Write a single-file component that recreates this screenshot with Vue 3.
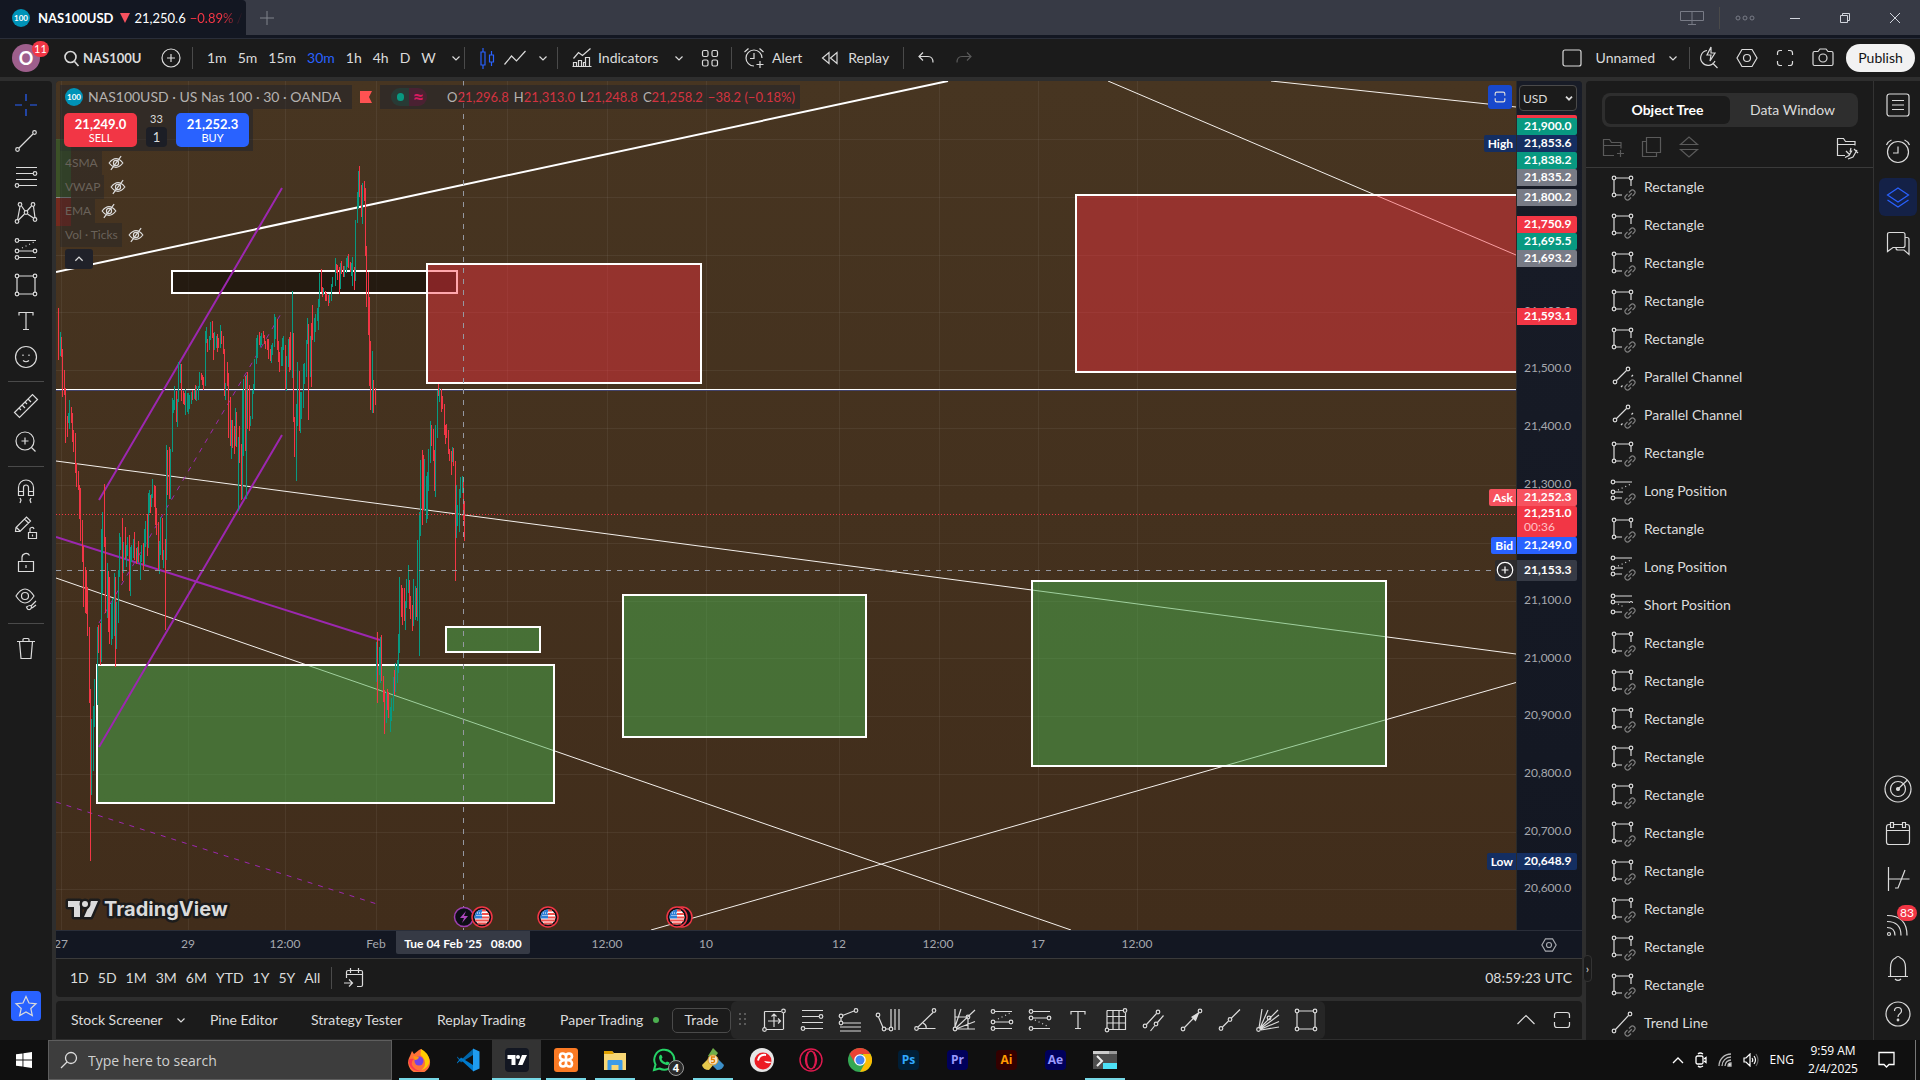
<script setup>
import { h } from 'vue'

const link = '<g transform="rotate(-45 21 22)" stroke="#7d7d7d" fill="none"><path d="M20 19.500h-2.500a2.500 2.500 0 0 0 0 5h2.500M22 19.500h2.500a2.500 2.500 0 0 1 0 5h-2.500M18.500 22h5"/></g>'
const dot = (x, y) => `<circle cx="${x}" cy="${y}" r="1.800"/>`

const icons = {
  cross: '<path d="M14 3v7M14 18v7M3 14h7M18 14h7"/>',
  trend: dot(5.5, 22.5) + dot(22.5, 5.5) + '<path d="M7 21L21 7"/>',
  fib: '<path d="M4 4.500h21M4 10.500h17M4 16.500h21M7 22.500h18"/>' + dot(23, 10.5) + dot(5, 22.5),
  pattern: dot(5, 22.5) + dot(8, 5.5) + dot(21, 5.5) + dot(23, 20.5) + dot(14, 13.5) + '<path d="M5.500 21L8 7.500M9.500 7l3.500 5M19.500 7l-4.500 5M21.500 7.500L23 19M15.500 15l6 4M12.500 15l-6 6"/>',
  long: dot(5, 5.5) + dot(5, 16) + dot(5, 22.5) + dot(23, 16) + '<path d="M7 5.500h17M7 16h14M7 22.500h17"/><path stroke-dasharray="1 3" d="M10 13l12-6"/>',
  short: dot(5, 5.5) + dot(5, 12) + dot(5, 22.5) + dot(23, 12) + '<path d="M7 5.500h17M7 12h14M7 22.500h17"/><path stroke-dasharray="1 3" d="M9 14l12 6"/>',
  rect: dot(5, 5) + dot(23, 5) + dot(5, 23) + dot(23, 23) + '<path d="M7 5h14M7 23h14M5 7v14M23 7v14"/>',
  text: '<path d="M7 8.500V5.500h14v3M14 5.500v17M11 22.500h6"/>',
  smile: '<circle cx="14" cy="14" r="10.500"/><path d="M11 17.500q3 2.500 6 0M11 11.500v1.500M17 11.500v1.500"/>',
  ruler: '<path d="M2.500 20.500L20.500 2.500l5 5-18 18zM7 16l2 2M10 13l3 3M13 10l2 2M16 7l3 3"/>',
  zoom: '<circle cx="13" cy="13" r="9"/><path d="M19.500 19.500l4 4M13 9.500v7M9.500 13h7"/>',
  magnet: '<path d="M6.500 18.500v-8a7.500 7.500 0 0 1 15 0v8h-5v-8a2.500 2.500 0 0 0-5 0v8zM6.500 14.500h5M16.500 14.500h5M8 21l1 2-1 3M19 21l-1 2 1 3"/>',
  pencilLock: '<path d="M3.500 18.500l.5-4L14.500 4l4 4L8 18.500zM12.500 6l4 4M4.500 14.500l3.500 3.500M16.500 19.500h8v6h-8zM18 19.500v-2.500a2 2 0 0 1 4-1M20.500 21.500v2"/>',
  lock: '<path d="M6.500 12.500h15v10h-15zM10 12.500v-4a4 4 0 0 1 7.500-2M14 16v3"/>',
  eye: '<path d="M4 11q9-14 18 0q-9 14-18 0z"/><circle cx="13" cy="11" r="3.500"/><path d="M14.500 22c3-2 5-2 5 0s-2 3.500-4 2zM19 21l5-5M20 23l4-3"/>',
  trash: '<path d="M5 7.500h18M7.500 7.500l1.500 17h10l1.500-17M11 7.500v-2q0-1 1-1h4q1 0 1 1v2"/>',
  star: '<path d="M14 4.500l3 6.500 7 .8-5.200 4.700 1.500 7-6.300-3.600-6.300 3.600 1.500-7L4 11.800l7-.8z"/>',
  search: '<circle cx="12.500" cy="13" r="5.500"/><path d="M16.500 17.500l4 4.500"/>',
  plusCircle: '<circle cx="14" cy="14" r="9"/><path d="M14 10v8M10 14h8"/>',
  caret: '<path d="M10.500 12.500L14 16l3.500-3.500"/>',
  candles: '<path d="M8 8h4v13H8zM10 4v4M10 21v4M16.500 11h4v7h-4zM18.500 7v4M18.500 18v4"/>',
  line: '<path d="M3.500 20.500l7-8.500 5 5 9-10"/>',
  indicators: '<path d="M5.500 14.500l5-6 4 3 8-7M5.500 22.500v-4h3v4zM10.500 22.500v-6h3v6zM15.500 22.500v-4h2v4M17.500 22.500v-9h4v9zM4.500 22.500h19"/>',
  grid: '<rect x="6.500" y="6.500" width="5.500" height="6" rx="1.500"/><rect x="16" y="6.500" width="5.500" height="6" rx="1.500"/><rect x="6.500" y="16" width="5.500" height="6" rx="1.500"/><rect x="16" y="16" width="5.500" height="6" rx="1.500"/>',
  alert: '<path d="M14 22a8 8 0 1 1 8-8M14 9v5.500h-4M4.500 8l4-3.500M23.500 8l-4-3.500M20 17v7M16.500 20.500h7"/>',
  replay: '<path d="M13 8.500v11L6.500 14zM21 8.500v11L14.500 14z"/>',
  undo: '<path d="M11 8.500l-4 4 4 4M7 12.500h9q5 0 5 6"/>',
  redo: '<path d="M17 8.500l4 4-4 4M21 12.500h-9q-5 0-5 6"/>',
  box: '<rect x="5" y="6" width="18" height="16" rx="2"/>',
  quick: '<path d="M12 6.500A7.500 7.500 0 1 0 20 17M17.500 19l5 5M16 3l-4 8h4l-1 6 5-8h-4z"/>',
  hex: '<path d="M9 5.500h10l5 8.500-5 8.500H9L4 14z"/><circle cx="14" cy="14" r="3.500"/>',
  full: '<path d="M6.500 11V9q0-2.500 2.500-2.500h2M17 6.500h2q2.500 0 2.500 2.500v2M21.500 17v2q0 2.500-2.500 2.500h-2M11 21.500H9q-2.500 0-2.500-2.500v-2"/>',
  camera: '<path d="M4 9q0-1.500 1.500-1.500H9l2-2.500h6l2 2.500h3.500q1.500 0 1.500 1.500v11q0 1.500-1.500 1.500h-17Q4 21.500 4 20z"/><circle cx="14" cy="14" r="4"/>',
  eyeOff: '<path d="M6 14q8-10 16 0q-8 10-16 0zM20 6L8 22"/><circle cx="14" cy="14" r="3"/>',
  list: '<rect x="3" y="3" width="22" height="22" rx="2.500"/><path d="M8 9.500h12M8 14h12M8 18.500h12"/>',
  alarm: '<circle cx="14" cy="15" r="10.500"/><path d="M14 9.500v6.500h-5M2.500 8Q4 4.500 7.500 3M25.500 8Q24 4.500 20.500 3"/>',
  layers: '<path d="M14 5l10.500 7L14 19 3.500 12zM3.500 17L14 24l10.500-7"/>',
  chat: '<path d="M5.500 3.500h13.500q2 0 2 2v11q0 2-2 2H9l-5.500 4v-17q0-2 2-2zM21 8.500h2q2 0 2 2v15l-5-4.500h-6q-2 0-2-2"/>',
  radar: '<circle cx="14" cy="14" r="13"/><circle cx="14" cy="14" r="7.500"/><circle cx="14" cy="14" r="1.500" fill="currentColor"/><path d="M14 14l9.500-9"/>',
  calendar: '<path d="M6 4.500H5q-2.500 0-2.500 2.500v15q0 2.500 2.500 2.500h18q2.500 0 2.500-2.500V7q0-2.500-2.500-2.500h-1M9.500 4.500h9M2.500 10.500h23M6.500 2.500h3v5h-3zM18.500 2.500h3v5h-3z"/>',
  dom: '<path d="M4.500 2v24M4.500 14h21M11 23h3l7-18"/>',
  feed: '<circle cx="5" cy="24" r="1.500"/><path d="M3 17.500q8 0 8 8M3 11.500q14 0 14 14M3 5.500q20 0 20 20"/>',
  bell: '<path d="M4 21.500h20M6.500 21.500v-9q0-7.500 5-9.500 2.500-3 5 0 5 2 5 9.500v9M11 24q3 3 6 0"/>',
  help: '<circle cx="14" cy="14" r="12"/><path d="M10.500 11q0-3.500 3.500-3.500t3.500 3.500q0 1.500-2 3-1.500 1-1.500 3"/><circle cx="14" cy="20" r=".8"/>',
  folderAdd: '<path d="M15 22.500H4.500v-16h6l2 3h9.500v6M4.500 12.500h17M21.500 17v7M18 20.500h7"/>',
  copy: '<path d="M9.500 4.500h14v15h-14zM9.500 8.500h-4v15h14v-4"/>',
  updown: '<path d="M5.500 11.500L14 4l8.500 7.500zM5.500 16.500L14 24l8.500-7.500z"/>',
  folderBrush: '<path d="M12 22.500H4.500v-17h6l2 3h9.500v4M4.500 11.500h17M12 24.500l4-2 3-5M15 26l5-2 4-7M13 18l4 4M18 15l-1 4M21 16l4 4"/>',
  lRect: dot(5, 5) + dot(22, 5) + dot(5, 22) + '<path d="M7 5h13M7 22h6M5 7v13M22 7v6"/>' + link,
  lChannel: dot(6, 19) + dot(19, 6) + '<path d="M7.500 17.500l10-10M22.500 13.500l1.500-1.500M12 24l1.500-1.500"/>' + link,
  lLong: dot(4, 5) + dot(4, 15) + dot(4, 21) + '<path d="M6 5h17M6 15h8M6 21h7"/><path stroke-dasharray="1 3" d="M9 13l13-6"/>' + link,
  lShort: dot(4, 5) + dot(4, 11) + dot(4, 21) + '<path d="M6 5h17M6 11h14M6 21h7M20.500 12a1.500 1.500 0 1 1 3 0"/><path stroke-dasharray="1 3" d="M9 13l6 3"/>' + link,
  lTrend: dot(5, 22) + dot(21, 5) + '<path d="M6.500 20.500L19.500 6.500"/>' + link,
  goto: '<path d="M6.500 14V8q0-1.500 1.500-1.500h13q1.500 0 1.500 1.500v13q0 1.500-1.500 1.500h-4M6.500 10.500h16M10.500 4v5M18.500 4v5M4 19h8M9 15.500l3.500 3.500-3.500 3.500"/>',
  priceDate: '<path d="M4.500 5.500H21M4.500 5.500V22M6 23.500h17M23.500 7v16.500M14 8v13M8 15h12M11.500 10.500L14 8l2.500 2.500M18 12.500l2.500 2.500-2.500 2.500"/>' + dot(23.5, 5) + dot(4.5, 23.5),
  extension: dot(5, 10) + dot(20, 4.5) + dot(5, 17) + '<path d="M6.500 9.500L18 5M5 12v3M7 17h18M4 21h21M4 25h21"/>',
  timeFib: dot(4, 9) + dot(10, 23) + dot(17, 23) + '<path d="M4.500 11l4.500 10.500M12 23h3M17 3v18M21 3v21M25 3v21"/>',
  angle: dot(4.5, 22.5) + dot(22, 4.5) + '<path d="M6 21L21 6.500M6.500 22.500h17M11 17q4 2 3 5.500"/>',
  fan: dot(5, 23) + dot(18, 11) + '<path d="M5 3v18M7 23h18M5 21L11 3M6 22L25 4M7 22.500l18-7M5 11h11M18 13v10"/>',
  gridBox: '<path d="M5 4.500h17M5 4.500V22M7 23.500h16.500V7M5 10.500h18M5 17h18M11 5v18M17 5v18"/>' + dot(23, 4.5) + dot(5, 24),
  channel: dot(5, 20) + dot(18, 6) + dot(16, 18) + '<path d="M6.500 18.500l10-11M10.500 25l4-5M17.500 16.500l6-7"/>',
  arrow: dot(5, 23) + dot(22, 5) + '<path d="M6.500 21.500L20.500 7"/><path fill="currentColor" d="M20.500 7l-6.500 4 3.500 3.500z"/>',
  ray: dot(5, 22.5) + dot(14, 13.5) + '<path d="M6.500 21l6-6M15.500 12L24 3.500"/>',
  gann: dot(4.500, 23.500) + dot(15, 12) + '<path d="M5 22L8 3M6 22l8-18M6 22L24 4M6 23l19-14M6 23.500l19-8M7 24l18-3"/>',
  up: '<path d="M5.500 18L14 9.500l8.500 8.500"/>',
  restore: '<path d="M6.500 12v-3q0-2.500 2.500-2.500h10q2.500 0 2.500 2.500v3M6.500 16v3q0 2.500 2.500 2.500h10q2.500 0 2.500-2.500v-3"/>'
}

const Icon = (p) =>
  h('svg', {
    width: p.s || 28, height: p.s || 28, viewBox: '0 0 28 28', fill: 'none',
    stroke: 'currentColor', 'stroke-width': p.w || 1.2, 'aria-hidden': 'true', innerHTML: icons[p.n]
  })
Icon.props = ['n', 's', 'w']

const leftTools = [
  ['cross', 'Crosshair'], ['trend', 'Trend line'], ['fib', 'Fib retracement'], ['pattern', 'XABCD pattern'],
  ['long', 'Forecast'], ['rect', 'Shapes'], ['text', 'Text'], ['smile', 'Icons'], null,
  ['ruler', 'Measure'], ['zoom', 'Zoom in'], null,
  ['magnet', 'Magnet mode'], ['pencilLock', 'Keep drawing'], ['lock', 'Lock drawings'], ['eye', 'Hide drawings'], null,
  ['trash', 'Remove drawings']
]
const frames = ['1m', '5m', '15m', '30m', '1h', '4h', 'D', 'W']
const ranges = ['1D', '5D', '1M', '3M', '6M', 'YTD', '1Y', '5Y', 'All']
const favorites = ['priceDate', 'fib', 'extension', 'timeFib', 'angle', 'fan', 'long', 'short', 'text', 'gridBox', 'channel', 'arrow', 'ray', 'gann', 'rect']
const studies = ['4SMA', 'VWAP', 'EMA', 'Vol · Ticks']
const ohlc = [['O', '21,296.8'], ['H', '21,313.0'], ['L', '21,248.8'], ['C', '21,258.2']]

const kinds = { R: ['lRect', 'Rectangle'], P: ['lChannel', 'Parallel Channel'], L: ['lLong', 'Long Position'], S: ['lShort', 'Short Position'], T: ['lTrend', 'Trend Line'] }
const objects = [...'RRRRRPPRLRLSRRRRRRRRRRT'].map((k) => kinds[k])

const rightTop = [['list', 'Watchlist'], ['alarm', 'Alerts'], ['layers', 'Object tree'], ['chat', 'Chats']]
const rightBottom = [['radar', 'Screeners'], ['calendar', 'Calendars'], ['dom', 'Order panel'], ['feed', 'Streams'], ['bell', 'Notifications'], ['help', 'Help']]

const scale = [
  ['21,600.0', 230], ['21,500.0', 287], ['21,400.0', 345], ['21,300.0', 403], ['21,100.0', 519], ['21,000.0', 577],
  ['20,900.0', 634], ['20,800.0', 692], ['20,700.0', 750], ['20,600.0', 807]
]
const tags = [
  ['', 34, 'red'], ['21,900.0', 37, 'green'], ['21,853.6', 54, 'navy', 'High'], ['21,838.2', 71, 'green'],
  ['21,835.2', 88, 'grey'], ['21,800.2', 108, 'grey'], ['21,750.9', 135, 'red'], ['21,695.5', 152, 'green'],
  ['21,693.2', 169, 'grey'], ['21,593.1', 227, 'red'], ['21,252.3', 408, 'rose', 'Ask'],
  ['21,249.0', 456, 'blue', 'Bid'], ['20,648.9', 772, 'navy', 'Low']
]
const times = [['27', 5], ['29', 132], ['12:00', 229], ['Feb', 320], ['12:00', 551], ['10', 650], ['12', 783], ['12:00', 882], ['17', 982], ['12:00', 1081]]
const gridX = [61, 188, 285, 376, 507, 607, 706, 839, 939, 1038, 1137]
const gridY = [139, 197, 255, 312, 370, 428, 485, 543, 601, 658, 716, 774, 832, 889]

// price bars: x, high, low in thirds of a chart unit, measured from unit row 260
const down = [
  [175,144,300],[184,232,290],[187,267,411],[193,330,404],[196,384,549],[202,468,530],[214,441,490],[217,460,546],[220,510,576],[226,519,640],[229,610,681],[235,633,690],[238,676,777],[241,684,842],[247,780,906],[250,857,1041],[256,921,1060],[259,930,1062],[262,980,1128],[268,1101,1330],[271,1287,1803],[295,1095,1180],[301,1088,1215],[313,672,860],[316,831,1058],[325,933,1115],[328,950,1152],[346,951,1220],[367,774,963],[376,801,897],[388,825,993],[403,816,900],[409,864,912],[415,842,906],[430,850,930],[442,763,887],[451,705,760],[463,675,740],[466,678,795],[469,744,825],[475,786,932],[487,773,900],[496,837,1110],[502,570,705],[508,561,717],[529,393,487],[544,311,422],[550,393,433],[553,400,435],[577,390,420],[586,375,421],[604,339,360],[607,345,375],[610,350,390],[622,238,275],[637,183,235],[640,219,300],[652,222,277],[655,234,265],[664,213,252],[670,228,282],[673,267,408],[682,306,378],[685,339,533],[691,411,557],[697,480,563],[703,498,582],[709,457,560],[718,498,609],[724,552,719],[736,348,573],[742,336,507],[748,375,512],[778,216,255],[790,213,234],[793,224,252],[796,243,267],[802,238,270],[805,237,297],[811,267,304],[832,177,270],[835,243,306],[838,275,335],[856,255,390],[868,231,336],[871,216,330],[880,219,486],[883,470,591],[898,333,513],[925,192,480],[934,189,381],[937,135,240],[964,27,96],[967,81,111],[976,93,123],[979,98,124],[985,106,138],
  [1009,12,40],[1012,15,60],[1018,21,102],[1024,3,42],[1030,18,51],[1045,-18,24],[1051,6,36],[1063,21,90],[1078,-282,-189],[1084,-225,-129],[1093,-237,-177],[1096,-216,-12],[1099,-42,141],[1105,36,225],[1108,111,378],[1111,243,450],[1120,360,459],[1126,384,435],[1132,1116,1328],[1144,1125,1262],[1150,1248,1325],[1153,1290,1422],[1162,1287,1350],[1165,1295,1375],[1183,1230,1305],[1204,975,1070],[1207,984,1095],[1213,984,1083],[1228,960,1046],[1231,1008,1078],[1237,1036,1113],[1249,983,1070],[1267,570,795],[1270,585,750],[1294,495,558],[1300,507,603],[1303,570,693],[1315,372,408],[1324,387,456],[1327,408,447],[1333,432,525],[1336,495,552],[1339,492,534],[1345,510,582],[1348,567,603],[1354,573,645],[1360,564,618],[1366,603,963],[1390,650,780],[1393,723,843]
]
const up = [
  [181,216,288],[205,459,490],[208,420,507],[274,1377,1605],[280,1337,1533],[283,1257,1400],[292,1101,1335],[304,808,1205],[307,756,1000],[322,909,1074],[334,1030,1155],[337,1015,1137],[343,939,1127],[349,1027,1167],[355,930,1088],[358,819,950],[361,830,870],[370,845,940],[379,855,920],[382,831,888],[391,860,1007],[394,855,905],[400,837,893],[412,862,908],[421,885,960],[424,855,905],[433,808,915],[436,782,860],[445,699,863],[448,690,760],[454,703,740],[457,657,715],[478,843,941],[481,771,884],[490,870,925],[499,555,900],[511,567,717],[517,414,576],[520,420,460],[523,378,450],[532,417,500],[535,306,426],[541,312,370],[556,387,465],[562,400,455],[565,399,461],[568,404,447],[574,396,431],[583,389,418],[589,378,423],[595,378,419],[598,336,385],[616,213,378],[619,201,250],[628,229,270],[631,186,240],[643,216,270],[649,228,265],[661,195,265],[676,370,420],[694,480,597],[706,444,558],[715,531,752],[727,390,717],[730,357,587],[739,345,717],[751,469,498],[757,390,477],[760,372,402],[763,297,388],[769,234,312],[772,226,293],[781,228,260],[784,219,254],[814,254,308],[817,250,285],[823,162,262],[826,171,238],[844,261,318],[847,234,318],[850,228,270],[859,288,393],[865,237,321],[877,93,354],[889,432,663],[892,306,498],[901,396,518],[904,396,477],[910,312,444],[913,309,372],[919,240,350],[922,174,252],[931,228,351],[943,174,246],[946,162,216],[952,144,183],[955,117,210],[958,39,140],[970,85,105],[988,103,129],[994,72,123],[997,51,80],
  [1006,-6,78],[1021,10,88],[1033,18,50],[1039,-6,40],[1042,-12,22],[1054,10,48],[1057,-9,78],[1066,-120,63],[1072,-204,-111],[1075,-267,-155],[1087,-231,-108],[1117,273,459],[1129,1145,1265],[1138,1160,1245],[1141,1131,1268],[1159,1295,1390],[1171,1340,1415],[1174,1315,1383],[1180,1250,1353],[1186,1210,1295],[1192,1200,1270],[1195,1122,1238],[1198,951,1178],[1216,1023,1110],[1219,957,1043],[1225,915,1000],[1240,957,1098],[1246,978,1080],[1252,840,1083],[1258,756,1188],[1261,600,828],[1273,597,752],[1279,648,788],[1282,636,778],[1285,567,692],[1291,483,608],[1306,495,711],[1312,390,534],[1318,384,426],[1357,561,606],[1369,675,834],[1372,735,798],[1378,687,816],[1381,651,714],[1387,648,699]
]
const bars = (set) => set.map(([x, a, b]) => `M${x + 0.5} ${a}V${b}`).join('')
const adobe = [['Ps', '#001e36', '#31a8ff'], ['Pr', '#00005b', '#9999ff'], ['Ai', '#330000', '#ff9a00'], ['Ae', '#00005b', '#9999ff']]
</script>

<template>
  <div class="app">
    <header class="titlebar">
      <div class="tab">
        <span class="logo">100</span>
        <b class="tab-name">NAS100USD</b>
        <svg width="10" height="10" viewBox="0 0 10 10"><path d="M0 0h10L5 10z" fill="#f7525f" /></svg>
        <span class="tab-price">21,250.6</span>
        <span class="tab-change">−0.89% /</span>
      </div>
      <button class="new-tab" aria-label="New tab">
        <svg width="14" height="14" viewBox="0 0 14 14" stroke="#80838c"><path d="M7 0v14M0 7h14" /></svg>
      </button>
      <div class="window-tools">
        <button aria-label="Displays" class="wide"><svg width="24" height="16" viewBox="0 0 24 16" fill="none" stroke="#787b86"><path d="M.5 1.500h23v9H.5zM12 1.500v13M8 14.500h8" /></svg></button>
        <i class="bar"></i>
        <button aria-label="More" class="w50"><svg width="20" height="6" viewBox="0 0 20 6" fill="none" stroke="#787b86"><circle cx="3" cy="3" r="2" /><circle cx="10" cy="3" r="2" /><circle cx="17" cy="3" r="2" /></svg></button>
        <button aria-label="Minimize" class="w50"><svg width="10" height="10" viewBox="0 0 10 10" stroke="#d1d4dc"><path d="M0 5.500h10" /></svg></button>
        <button aria-label="Restore" class="w50"><svg width="10" height="10" viewBox="0 0 10 10" fill="none" stroke="#d1d4dc"><path d="M.5 2.500h7v7h-7zM2.500 2.500v-2h7v7h-2" /></svg></button>
        <button aria-label="Close" class="w50"><svg width="12" height="12" viewBox="0 0 12 12" stroke="#d1d4dc"><path d="M1 1l10 10M11 1L1 11" /></svg></button>
      </div>
    </header>

    <nav class="toolbar">
      <button class="avatar-cell" aria-label="Account"><span class="avatar">O</span><span class="badge">11</span></button>
      <button class="symbol"><Icon n="search" w="1.6" /><b>NAS100U</b></button>
      <button class="center" aria-label="Compare"><Icon n="plusCircle" /></button>
      <i class="bar"></i>
      <div class="frames">
        <button v-for="f in frames" :key="f" :class="{ current: f === '30m' }">{{ f }}</button>
        <button class="narrow" aria-label="More intervals"><Icon n="caret" /></button>
      </div>
      <i class="bar"></i>
      <div class="group">
        <button class="blue" aria-label="Candles"><Icon n="candles" /></button>
        <button aria-label="Line"><Icon n="line" /></button>
        <button class="narrow" aria-label="Chart types"><Icon n="caret" /></button>
      </div>
      <i class="bar"></i>
      <div class="group indicators">
        <button class="label"><Icon n="indicators" />Indicators</button>
        <button class="more" aria-label="Favorite indicators"><Icon n="caret" /></button>
        <button aria-label="Templates"><Icon n="grid" /></button>
      </div>
      <i class="bar"></i>
      <div class="group spread">
        <button class="label"><Icon n="alert" />Alert</button>
        <button class="label"><Icon n="replay" />Replay</button>
      </div>
      <i class="bar"></i>
      <div class="group undo">
        <button aria-label="Undo"><Icon n="undo" /></button>
        <button class="off" aria-label="Redo"><Icon n="redo" /></button>
      </div>
      <div class="right-tools">
        <button class="layout"><Icon n="box" />Unnamed</button>
        <button class="narrow" aria-label="Layouts"><Icon n="caret" /></button>
        <i class="bar"></i>
        <button class="cell" aria-label="Quick search"><Icon n="quick" /></button>
        <button class="cell" aria-label="Settings"><Icon n="hex" /></button>
        <button class="cell" aria-label="Fullscreen"><Icon n="full" /></button>
        <button class="cell" aria-label="Snapshot"><Icon n="camera" /></button>
        <button class="publish">Publish</button>
      </div>
    </nav>

    <main class="body">
      <aside class="left">
        <template v-for="(t, i) in leftTools" :key="i">
          <button v-if="t" :aria-label="t[1]" :class="{ blue: i === 0 }"><Icon :n="t[0]" /></button>
          <hr v-else />
        </template>
        <button class="fav" aria-label="Favorites"><Icon n="star" /></button>
      </aside>

      <section class="center-col">
        <div class="chart-card">
          <div class="plot-row">
            <div class="plot">
              <svg class="canvas" viewBox="56 81 1460 849" preserveAspectRatio="xMinYMin slice">
                <defs>
                  <linearGradient id="bg" x1="0" y1="0" x2="0" y2="1"><stop offset="0" stop-color="#473521" /><stop offset="1" stop-color="#412d1b" /></linearGradient>
                  <g id="flag">
                    <circle r="10" fill="#0c0e15" stroke="#f23645" stroke-width="1.500" />
                    <circle r="7.500" fill="#fff" />
                    <path d="M0-6.500h4M0-3h7M0 .5h7.400M-7 3.500H7M-4.500 6.500h9" stroke="#ef5350" stroke-width="2" />
                    <path d="M0 1.500V-7.500A7.500 7.500 0 0 0-7.400 1.500z" fill="#2e7fd6" />
                    <path d="M-5.500-1.500H0M-5-4H0" stroke="#fff" stroke-dasharray="1 1" />
                  </g>
                </defs>
                <rect x="56" y="81" width="1460" height="849" fill="url(#bg)" />
                <g stroke="#fff" stroke-opacity=".06">
                  <path v-for="x in gridX" :key="'x' + x" :d="`M${x + 0.5} 81V930`" />
                  <path v-for="y in gridY" :key="'y' + y" :d="`M56 ${y + 0.5}H1516`" />
                </g>
                <path d="M56 139h15v58H56z" fill="#2e7d32" fill-opacity=".4" />
                <path d="M56 197h15v29H56z" fill="#b71c1c" fill-opacity=".4" />
                <path d="M56 197.500h15" stroke="#888" />
                <g stroke="#f4f0ec" fill="none">
                  <path d="M56 272L948 81" stroke="#fff" stroke-width="2" />
                  <path d="M1108 81L1516 255M1271 81L1516 107M56 461L1516 654M56 578L1071 930M651 930L1516 682.500" />
                  <path d="M56 389.500H1516" stroke="#fff" />
                  <path d="M56 390.500H1516" stroke="#42436b" />
                </g>
                <g stroke="#fff" stroke-width="2">
                  <rect x="172" y="271" width="285" height="22" fill="#000" fill-opacity=".48" />
                  <g fill="#4caf50" fill-opacity=".5">
                    <rect x="97" y="665" width="457" height="138" />
                    <rect x="446" y="627" width="94" height="25" />
                    <rect x="623" y="595" width="243" height="142" />
                    <rect x="1032" y="581" width="354" height="185" />
                  </g>
                  <g fill="#ff3242" fill-opacity=".43">
                    <rect x="427" y="264" width="274" height="119" />
                    <rect x="1076" y="195" width="460" height="177" />
                  </g>
                </g>
                <g stroke="#9c27b0" stroke-width="2" fill="none">
                  <path d="M99 500L282 188M99 747L282 435M56 537L380 640" />
                  <path d="M99 623L282 312M56 802L380 905" stroke-width="1" stroke-dasharray="5 6" />
                </g>
                <g transform="translate(0 260) scale(.3333)" stroke-width="3" fill="none" shape-rendering="crispEdges">
                  <path :d="bars(up)" stroke="#089981" />
                  <path :d="bars(down)" stroke="#f23645" />
                </g>
                <path d="M56 514.500H1516" stroke="#f23645" stroke-dasharray="1 2" />
                <path d="M463.500 81V930M56 570.500H1516" stroke="#9598a1" stroke-dasharray="5 6" />
                <g fill="#dbdbdb" stroke="#1c1c1c" stroke-width="5" stroke-linejoin="round" paint-order="stroke">
                  <path d="M68 901h12v16h-6v-10h-6zM91 901h7l-7 16h-7z" />
                  <circle cx="85" cy="904" r="3" />
                  <text x="104" y="916" class="watermark">TradingView</text>
                </g>
                <circle cx="464" cy="917" r="9.500" fill="#0c0e15" stroke="#9c3fb0" stroke-width="1.500" />
                <path d="M466 911l-6 7h4l-2 5 6-7h-4z" fill="#ab47bc" />
                <circle cx="682" cy="917" r="10" fill="#0c0e15" stroke="#f23645" stroke-width="1.500" />
                <use href="#flag" x="482" y="917" /><use href="#flag" x="548" y="917" /><use href="#flag" x="677" y="917" />
              </svg>

              <div class="legend">
                <div class="legend-top">
                  <div class="shade name"><span class="logo">100</span>NAS100USD · US Nas 100 · 30 · OANDA</div>
                  <svg class="flagmark" width="12" height="12" viewBox="0 0 12 12"><path d="M0 0h12L9 6l3 6H0z" fill="#ff5252" /></svg>
                  <div class="shade values">
                    <span class="pill"><i></i><em>≈</em></span>
                    <span v-for="v in ohlc" :key="v[0]" class="ohlc">{{ v[0] }}<span>{{ v[1] }}</span></span>
                    <span class="ohlc"><span>−38.2 (−0.18%)</span></span>
                  </div>
                </div>
                <div class="shade trade">
                  <button class="sell">21,249.0<small>SELL</small></button>
                  <div class="lot"><span>33</span><button>1</button></div>
                  <button class="buy">21,252.3<small>BUY</small></button>
                </div>
                <div v-for="s in studies" :key="s" class="study"><span class="shade">{{ s }}</span><Icon n="eyeOff" s="24" w="1.4" /></div>
                <button class="collapse" aria-label="Collapse legend"><Icon n="up" s="12" w="3" /></button>
              </div>
              <button class="auto" aria-label="Fit"><Icon n="restore" s="18" w="1.8" /></button>
            </div>

            <div class="axis">
              <div class="currency"><select aria-label="Currency"><option>USD</option></select><Icon n="caret" s="24" w="2" /></div>
              <span v-for="s in scale" :key="s[0]" class="tick" :style="{ top: s[1] - 8 + 'px' }">{{ s[0] }}</span>
              <span v-for="t in tags" :key="t[1]" class="tag" :class="t[2]" :style="{ top: t[1] + 'px' }">{{ t[0] }}<em v-if="t[3]" :class="t[2]">{{ t[3] }}</em></span>
              <span class="tag red last">21,251.0<br /><small>00:36</small></span>
              <span class="tag cursor">21,153.3<em><Icon n="plusCircle" s="24" w="1.4" /></em></span>
            </div>
          </div>

          <div class="time-axis">
            <span v-for="t in times" :key="t[1]" class="time" :style="{ left: t[1] + 'px' }">{{ t[0] }}</span>
            <span class="time-cursor">Tue 04 Feb '25 &nbsp; 08:00</span>
            <button class="axis-gear" aria-label="Axis settings"><Icon n="hex" s="20" w="1.6" /></button>
          </div>

          <div class="ranges">
            <button v-for="r in ranges" :key="r">{{ r }}</button>
            <i class="bar"></i>
            <button aria-label="Go to" class="goto"><Icon n="goto" /></button>
            <button class="clock">08:59:23 UTC</button>
          </div>
        </div>

        <div class="widgets">
          <button class="wd screener">Stock Screener<Icon n="caret" /></button>
          <button class="wd pine">Pine Editor</button>
          <button class="wd tester">Strategy Tester</button>
          <button class="wd replay">Replay Trading</button>
          <button class="wd paper">Paper Trading<i></i></button>
          <button class="trade-btn">Trade</button>
          <div class="favs">
            <svg width="8" height="14" viewBox="0 0 8 14" fill="#5a5a5a"><path d="M0 0h2v2H0zM5 0h2v2H5zM0 5h2v2H0zM5 5h2v2H5zM0 10h2v2H0zM5 10h2v2H5z" /></svg>
            <button v-for="f in favorites" :key="f" :aria-label="f"><Icon :n="f" /></button>
          </div>
          <button class="wd up" aria-label="Open panel"><Icon n="up" /></button>
          <button class="wd max" aria-label="Maximize panel"><Icon n="restore" /></button>
        </div>
      </section>

      <aside class="panel">
        <button class="handle" aria-label="Hide panel">›</button>
        <div class="switch">
          <button class="on">Object Tree</button>
          <button>Data Window</button>
        </div>
        <div class="panel-tools">
          <button aria-label="Group"><Icon n="folderAdd" /></button>
          <button aria-label="Clone"><Icon n="copy" /></button>
          <button aria-label="Order"><Icon n="updown" /></button>
          <button class="manage" aria-label="Manage"><Icon n="folderBrush" /></button>
        </div>
        <ul>
          <li v-for="(o, i) in objects" :key="i"><Icon :n="o[0]" />{{ o[1] }}</li>
        </ul>
      </aside>

      <aside class="rail">
        <button v-for="r in rightTop" :key="r[0]" :aria-label="r[1]" :class="{ on: r[0] === 'layers' }"><Icon :n="r[0]" /></button>
        <div class="rail-bottom">
          <button v-for="r in rightBottom" :key="r[0]" :aria-label="r[1]"><Icon :n="r[0]" /><span v-if="r[0] === 'feed'" class="badge">83</span></button>
        </div>
      </aside>
    </main>

    <footer class="taskbar">
      <button class="start" aria-label="Start">
        <svg width="16" height="16" viewBox="0 0 16 16" fill="#fff"><path d="M0 2.300L6.500 1.400v6.200H0zM7.400 1.300L16 0v7.600H7.400zM0 8.400h6.500v6.200L0 13.700zM7.400 8.400H16V16l-8.600-1.300z" /></svg>
      </button>
      <label class="search">
        <svg width="18" height="18" viewBox="0 0 18 18" fill="none" stroke="#ddd" stroke-width="1.300"><circle cx="11" cy="7" r="5.500" /><path d="M7 11l-6 6" /></svg>
        <input type="text" placeholder="Type here to search" aria-label="Search" />
      </label>
      <div class="apps">
        <button class="run" aria-label="Firefox"><svg viewBox="0 0 24 24"><path d="M3 8l2-5 2 3 5-4 2-1q3 3 4 5l3 2a11 11 0 1 1-19 2z" fill="#ff7139" /><path d="M14 1q8 4 8.500 12a10 10 0 0 1-8 9q5-4 3-10-2-4-4-5z" fill="#ffcb00" /><path d="M2 12a10 10 0 0 0 12 11q-7-1-9-6-1-4 2-6-4-1-5 1z" fill="#ff3750" /><circle cx="12" cy="13" r="4.500" fill="#7542e5" /><path d="M6 8l6 1q-1 3-4 3z" fill="#ff980e" /></svg></button>
        <button aria-label="Code"><svg viewBox="0 0 24 24"><path d="M17 1L5 12 1 8.500v1l4 5L17 7z" fill="#0065a9" /><path d="M17 23L5 12 1 15.500v-1L5 9.500 17 17z" fill="#007acc" /><path d="M17 .500l6.500 3v17l-6.500 3z" fill="#1f9cf0" /></svg></button>
        <button class="front" aria-label="TradingView"><svg viewBox="0 0 24 24"><rect width="24" height="24" rx="4" fill="#131722" /><path d="M2.500 7h8v10H6.500v-6h-4zM17 7h5l-4.500 10H13z" fill="#fff" /><circle cx="13" cy="9" r="2" fill="#fff" /></svg></button>
        <button class="run" aria-label="XAMPP"><svg viewBox="0 0 24 24"><rect width="24" height="24" rx="3" fill="#fb7a24" /><path d="M12 12q-6 0-6-3.500T9 5.500t3 3v7q0 3-3 3t-3-3T12 12q6 0 6 3.500t-3 3-3-3v-7q0-3 3-3t3 3-6 3.500z" fill="none" stroke="#fff" stroke-width="2.600" /></svg></button>
        <button class="run" aria-label="Explorer"><svg viewBox="0 0 24 24"><path d="M1 3h8l2 2h12v17H1z" fill="#f8d775" /><path d="M1 3h8l2 3H1z" fill="#e0a100" /><path d="M4.500 22v-9q0-1 1-1h13q1 0 1 1v9h-4v-5h-7v5z" fill="#3c9be8" /></svg></button>
        <button class="badged" aria-label="WhatsApp"><svg viewBox="0 0 24 24"><path d="M2 22l1.500-5.500a10 10 0 1 1 4 4z" fill="none" stroke="#25d366" stroke-width="2" /><path d="M8 7q1-1 2 1l.5 1.500-1 1.500q1 2.500 4 3.500l1.500-1 2.500 1q0 3-3 2.500Q8 15.500 7 10q0-2 1-3z" fill="#25d366" /></svg><span>4</span></button>
        <button class="run" aria-label="MetaTrader"><svg viewBox="0 0 24 24"><path d="M12 0l5 5-5 7-5-4z" fill="#6fae4a" /><path d="M1 17l7-7 5 6-5 6q-6 0-7-5z" fill="#e7c94c" /><path d="M23 17l-6-6-6 6 5 5q6 0 7-5z" fill="#3c8fc8" /><circle cx="12" cy="12" r="5" fill="#f2e3c4" stroke="#d99b2b" /><path d="M14 9h-3.500v2.500q3-.5 3 1.500t-3.500 1.500" fill="none" stroke="#e67e00" stroke-width="1.300" /></svg></button>
        <button aria-label="cTrader"><svg viewBox="0 0 24 24"><circle cx="12" cy="12" r="12" fill="#e6e6e6" /><circle cx="13" cy="13" r="8.500" fill="#ec1c24" /><path d="M16 7q-7-1-8 5.500" fill="none" stroke="#fff" stroke-width="2" /><path d="M22 14q-5 3-8-1" fill="#fff" /></svg></button>
        <button aria-label="Opera GX"><svg viewBox="0 0 24 24" fill="none" stroke="#e01a4f" stroke-width="1.400"><circle cx="12" cy="12" r="11" /><ellipse cx="12" cy="12" rx="4.500" ry="9" /><path d="M9 4q-5 8 0 16M15 4q5 8 0 16" /></svg></button>
        <button aria-label="Chrome"><svg viewBox="0 0 24 24"><circle cx="12" cy="12" r="12" fill="#34a853" /><path d="M1.600 6A12 12 0 0 1 22.400 6H12l-5 9z" fill="#ea4335" /><path d="M22.400 6A12 12 0 0 1 12 24l5-9-2-9z" fill="#fbbc04" /><circle cx="12" cy="12" r="5.800" fill="#fff" /><circle cx="12" cy="12" r="4.500" fill="#4285f4" /></svg></button>
        <button v-for="a in adobe" :key="a[0]"><span class="adobe" :style="{ background: a[1], color: a[2] }">{{ a[0] }}</span></button>
        <button class="run" aria-label="Terminal"><svg viewBox="0 0 24 24"><path d="M0 3h24v18H0z" fill="#4d4d4d" /><path d="M0 3h24v3H0z" fill="#ccc" /><path d="M16 3h8v3h-8z" fill="#999" /><path d="M4 8l5 5-5 5" fill="none" stroke="#eee" stroke-width="2" /><path d="M10 15h14v6H10z" fill="#4de1f7" /></svg></button>
      </div>
      <div class="tray">
        <svg width="12" height="8" viewBox="0 0 12 8" fill="none" stroke="#fff" stroke-width="1.300"><path d="M1 7l5-5 5 5" /></svg>
        <svg width="12" height="16" viewBox="0 0 12 16" fill="none" stroke="#fff" stroke-width="1.300"><rect x="1" y="4" width="7" height="8" rx="1.500" /><path d="M9 7l2-1.500v5L9 9M3 2q2-2 5 0M3 14q2 2 5 0" /></svg>
        <svg width="14" height="14" viewBox="0 0 14 14" fill="none" stroke="#bbb" stroke-width="1.300"><path d="M1 13A12 12 0 0 1 13 1M4 13A9 9 0 0 1 13 4M7 13a6 6 0 0 1 6-6" /><path d="M10 13q0-3 3-3v3z" fill="#fff" /></svg>
        <svg width="16" height="14" viewBox="0 0 16 14" fill="none" stroke="#fff" stroke-width="1.200"><path d="M1 5h2l4-4v12L3 9H1zM9 5q1.500 2 0 4M11 3q3 4 0 8" /><path d="M13 1q4 6 0 12" stroke="#666" /></svg>
        <span class="lang">ENG</span>
        <span class="date">9:59 AM<br />2/4/2025</span>
        <svg width="18" height="18" viewBox="0 0 18 18" fill="none" stroke="#fff" stroke-width="1.300"><path d="M1 1.500h15v12h-5l-2.500 2.500L6 13.500H1z" /></svg>
        <i class="edge"></i>
      </div>
    </footer>
  </div>
</template>

<style>
body { margin: 0; background: #1b1b1b; }
</style>

<style scoped>
.app { display: flex; flex-direction: column; height: 100vh; overflow: hidden; background: #2e2e2e; color: #dbdbdb; font: 14px/20px Lato, "Open Sans", sans-serif; }
.app * { box-sizing: border-box; }
button { background: none; border: 0; padding: 0; margin: 0; color: inherit; font: inherit; display: flex; align-items: center; justify-content: center; white-space: nowrap; flex: none; }
svg { display: block; flex: none; }
.bar { width: 1px; height: 22px; background: #4a4a4a; flex: none; }
.blue { color: #2962ff; }
.logo { width: 18px; height: 18px; border-radius: 9px; background: #0093b8; color: #fff; font: 700 8px/18px Lato, sans-serif; text-align: center; flex: none; }
.badge { position: absolute; min-width: 17px; height: 16px; border-radius: 8px; background: #f23645; color: #fff; font-size: 11px; line-height: 16px; text-align: center; }

.titlebar { display: flex; align-items: stretch; height: 39px; flex: none; background: #373a45; border-bottom: 1px solid #2a2e39; box-shadow: inset 0 -3px #131722; }
.tab { width: 246px; display: flex; align-items: center; padding: 0 0 2px 12px; background: #131722; color: #fff; white-space: nowrap; border-top-right-radius: 4px; }
.tab-name { margin: 0 7px 0 8px; font-size: 13px; }
.tab-price { margin-left: 4px; font-size: 13px; }
.tab-change { margin-left: 4px; font-size: 13px; color: #f23645; -webkit-mask-image: linear-gradient(90deg, #000 60%, transparent); mask-image: linear-gradient(90deg, #000 60%, transparent); }
.new-tab { width: 42px; height: 35px; }
.window-tools { display: flex; align-items: center; height: 36px; margin-left: auto; }
.wide { width: 54px; }
.w50 { width: 50px; }

.toolbar { display: grid; grid-template-columns: 52px 98px 42px 1px 271px 1px 92px 1px 173px 1px 171px 1px 80px 1fr; align-items: center; height: 38px; flex: none; background: #1b1b1b; margin-bottom: 4px; }
.avatar-cell { position: relative; height: 38px; }
.avatar { width: 28px; height: 28px; border-radius: 14px; background: #9e5f8c; color: #fff; font-size: 18px; font-weight: 700; line-height: 28px; }
.avatar-cell .badge { left: 32px; top: 2px; }
.symbol { justify-content: flex-start; padding-left: 6px; }
.symbol b { margin-left: -3px; font-size: 13px; }
.frames { display: flex; gap: 1px; padding-left: 9px; }
.frames button { padding: 0 5px; }
.frames .current { color: #2962ff; }
.frames .narrow { width: 28px; padding: 0; margin-left: auto; }
.group { display: flex; align-items: center; }
.group button:first-child { margin-left: 8px; }
.group .narrow { width: 28px; }
.label svg { margin-right: 2px; }
.indicators button:first-child { margin-left: 10px; }
.indicators .more { margin: 0 3px 0 7px; }
.spread { gap: 14px; }
.spread svg { margin-right: 4px; }
.undo { gap: 10px; }
.off { color: #5a5a5a; }
.right-tools { display: flex; align-items: center; justify-content: flex-end; padding-right: 5px; }
.layout svg { margin-right: 10px; }
.right-tools .narrow { width: 28px; margin: 0 2px 0 4px; }
.cell { width: 38px; }
.publish { width: 69px; height: 28px; margin-left: 4px; border-radius: 14px; background: #f2f2f2; color: #131313; }

.body { display: flex; flex: 1; min-height: 0; }
.left { width: 52px; flex: none; margin-right: 4px; background: #1b1b1b; padding-top: 6px; border-top-right-radius: 4px; display: flex; flex-direction: column; align-items: center; }
.left button { width: 52px; height: 36px; }
.left hr { width: 36px; margin: 6px 0; border: 0; border-top: 1px solid #4a4a4a; }
.left .fav { width: 30px; height: 30px; margin: auto 0 19px; border-radius: 4px; background: #2962ff; }

.center-col { flex: 1; min-width: 0; display: flex; flex-direction: column; }
.chart-card { flex: 1; min-height: 0; display: flex; flex-direction: column; border-radius: 4px; overflow: hidden; background: #1b1b1b; }
.plot-row { flex: 1; min-height: 0; display: flex; }
.plot { position: relative; flex: 1; min-width: 0; overflow: hidden; background: #443120; }
.canvas { width: 100%; height: 100%; }
.watermark { font: 700 20px Inter, sans-serif; }
.legend { position: absolute; left: 4px; top: 4px; }
.legend-top { display: flex; align-items: center; }
.shade { background: rgba(30, 33, 44, .5); color: #b5b2b0; }
.name { display: flex; align-items: center; width: 292px; height: 24px; padding-left: 5px; gap: 5px; font-size: 14px; white-space: nowrap; }
.flagmark { margin: 0 8px; }
.values { display: flex; align-items: center; width: 420px; height: 24px; padding-left: 11px; font-size: 13px; }
.pill { display: flex; width: 40px; height: 18px; border-radius: 9px; overflow: hidden; background: linear-gradient(90deg, #283a35 50%, #4a2132 50%); margin-right: 20px; }
.pill i { width: 8px; height: 8px; border-radius: 4px; background: #089981; margin: 5px 6px; }
.pill em { width: 20px; font: 700 17px/17px "Open Sans", sans-serif; color: #d81b60; text-align: center; }
.ohlc { margin-right: 5px; white-space: nowrap; }
.ohlc span { color: #d33340; }
.trade { display: flex; justify-content: space-between; width: 193px; height: 42px; padding: 4px; }
.sell, .buy { width: 73px; height: 34px; border-radius: 5px; flex-direction: column; color: #fff; font-weight: 700; font-size: 13px; line-height: 16px; }
.sell { background: #f23645; }
.buy { background: #2962ff; }
.trade small { font-size: 11px; line-height: 12px; font-weight: 400; }
.lot { font-size: 11px; line-height: 12px; display: flex; flex-direction: column; align-items: center; gap: 2px; color: #dbdbdb; }
.lot button { width: 21px; height: 20px; border-radius: 4px; background: #1c1e26; font-size: 13px; }
.study { display: flex; height: 24px; align-items: center; gap: 2px; }
.study .shade { padding: 0 4px 0 5px; line-height: 24px; font-size: 12px; color: #6a625a; background: rgba(30, 33, 44, .35); }
.collapse { width: 28px; height: 20px; margin: 2px 0 0 5px; border-radius: 3px; background: #202129; }
.auto { position: absolute; right: 4px; top: 4px; width: 24px; height: 24px; border-radius: 3px; background: #1848cc; }

.axis { position: relative; width: 66px; flex: none; padding: 4px 4px 0 2px; background: linear-gradient(#181c27, #131722); border-left: 1px solid #2a2a2a; font-size: 12px; }
.currency { position: relative; width: 58px; height: 26px; }
.currency select { appearance: none; width: 58px; height: 26px; border: 1px solid #4a4a4a; border-radius: 4px; background: #1b1b1b; color: #dbdbdb; font: 12px Lato, sans-serif; padding: 0 0 0 3px; }
.currency svg { position: absolute; right: -4px; top: 1px; pointer-events: none; }
.tick, .tag { position: absolute; left: 0; width: 60px; padding-left: 7px; line-height: 15px; }
.tick { color: #a6a8ae; }
.tag { height: 17px; border-radius: 0 2px 2px 0; color: #fff; font-weight: 700; }
.tag em { position: absolute; right: 61px; top: 0; height: 17px; padding: 0 3px 0 4px; line-height: 17px; border-radius: 2px 0 0 2px; font-style: normal; }
.red { background: #f23645; }
.green { background: #089981; }
.grey { background: #787b86; }
.navy { background: #142e61; }
.rose { background: #f7525f; }
.tag.blue, .tag em.blue { background: #2962ff; color: #fff; }
.last { top: 425px; height: 31px; line-height: 14px; }
.last small { font-size: 12px; font-weight: 400; color: #ffc0c5; }
.cursor { top: 479px; height: 21px; line-height: 19px; background: #363a45; }
.tag.cursor em { padding: 0; width: 21px; height: 21px; background: #2c2b2d; }
.cursor em svg { margin: -2px; }

.time-axis { position: relative; height: 29px; flex: none; background: #131722; border-top: 1px solid #2a2e39; border-bottom: 1px solid #3a3a3a; font-size: 12px; line-height: 26px; color: #a6a8ae; overflow: hidden; }
.time { position: absolute; transform: translateX(-50%); }
.time-cursor { position: absolute; left: 340px; top: 0; width: 134px; height: 23px; line-height: 26px; text-align: center; background: #363a45; border-radius: 0 0 2px 2px; color: #fff; font-weight: 700; }
.axis-gear { position: absolute; right: 23px; top: 4px; }

.ranges { display: flex; align-items: center; gap: 1px; height: 38px; flex: none; padding: 0 10px; }
.ranges button { padding: 0 4px; }
.ranges .bar { margin-left: 6px; }
.ranges .goto { margin-left: 3px; }
.ranges .clock { margin-left: auto; padding: 0; }

.widgets { display: flex; align-items: center; height: 38px; flex: none; margin: 4px 0 1px; background: #1b1b1b; border-radius: 4px 4px 0 0; padding: 0 6px 0 15px; }
.wd { justify-content: flex-start; }
.screener { width: 139px; gap: 4px; }
.pine { width: 101px; }
.tester { width: 126px; }
.replay { width: 123px; }
.paper { width: 112px; }
.paper i { width: 6px; height: 6px; border-radius: 3px; background: #4caf50; margin-left: 10px; }
.trade-btn { width: 59px; height: 25px; border: 1px solid #4a4a4a; border-radius: 5px; }
.favs { display: flex; align-items: center; height: 38px; width: 594px; padding-left: 8px; background: #262626; border-radius: 6px; }
.favs svg { margin-right: 8px; }
.favs button { width: 38px; }
.favs button svg { margin: 0; }
.up { margin-left: auto; }
.max { margin-left: 8px; }

.panel { position: relative; width: 288px; flex: none; margin-left: 4px; background: #1b1b1b; border-top-left-radius: 4px; border-right: 1px solid #333; display: flex; flex-direction: column; }
.handle { position: absolute; left: -3px; bottom: 58px; width: 9px; height: 27px; border: 1px solid #333; border-radius: 4px; background: #1b1b1b; font-size: 12px; }
.switch { display: flex; margin: 12px 15px 0 16px; height: 34px; padding: 3px; border-radius: 8px; background: #2e2e2e; flex: none; }
.switch button { flex: 1; border-radius: 6px; }
.switch .on { background: #1b1b1b; color: #fff; font-weight: 700; }
.panel-tools { display: flex; height: 41px; align-items: center; padding: 0 12px 0 13px; gap: 10px; color: #5a5a5a; border-bottom: 1px solid #3a3a3a; flex: none; }
.panel-tools .manage { margin-left: auto; color: #dbdbdb; }
ul { list-style: none; margin: 0; padding: 0; overflow: hidden; }
li { display: flex; align-items: center; height: 38px; padding-left: 23px; gap: 7px; }

.rail { width: 46px; flex: none; background: #1b1b1b; display: flex; flex-direction: column; align-items: center; padding: 1px 0 0 2px; }
.rail button { position: relative; width: 38px; height: 38px; margin: 4px 0; }
.rail .on { background: #142147; color: #2962ff; border-radius: 6px; }
.rail-bottom { margin-top: auto; }
.rail-bottom button { margin: 7px 0; }
.rail .badge { left: 18px; top: 0; width: 20px; font-size: 12px; }

.taskbar { display: flex; align-items: stretch; height: 40px; flex: none; background: #101010; font: 12px/18px "Open Sans", sans-serif; color: #fff; }
.start { width: 48px; }
.search { display: flex; align-items: center; width: 344px; padding-left: 11px; gap: 10px; background: #3d3d3d; border: 1px solid #5e5e5e; flex: none; }
.search input { flex: 1; min-width: 0; background: none; border: 0; outline: 0; padding: 0; color: #fff; font: 14px "Open Sans", sans-serif; }
.search input::placeholder { color: #d0d0d0; opacity: 1; }
.apps { display: flex; padding-left: 2px; }
.apps button { position: relative; width: 49px; }
.apps svg { width: 24px; height: 24px; }
.run::after, .front::after { content: ""; position: absolute; left: 5px; right: 4px; bottom: 0; height: 2px; background: #76d8e6; }
.apps .front { background: #333; }
.front::after { left: 0; right: 0; }
.badged span { position: absolute; right: 4px; bottom: 4px; width: 16px; height: 16px; border-radius: 8px; border: 1px solid #999; background: #2a2a2a; font: 700 11px/14px "Open Sans", sans-serif; }
.adobe { width: 21px; height: 20px; border-radius: 4px; font: 700 12px/19px "Open Sans", sans-serif; }
.tray { margin-left: auto; display: flex; align-items: center; gap: 11px; }
.date { width: 60px; text-align: center; margin: 0 4px 0 -2px; }
.edge { width: 1px; height: 40px; background: #777; margin: 0 4px 0 8px; }
</style>
